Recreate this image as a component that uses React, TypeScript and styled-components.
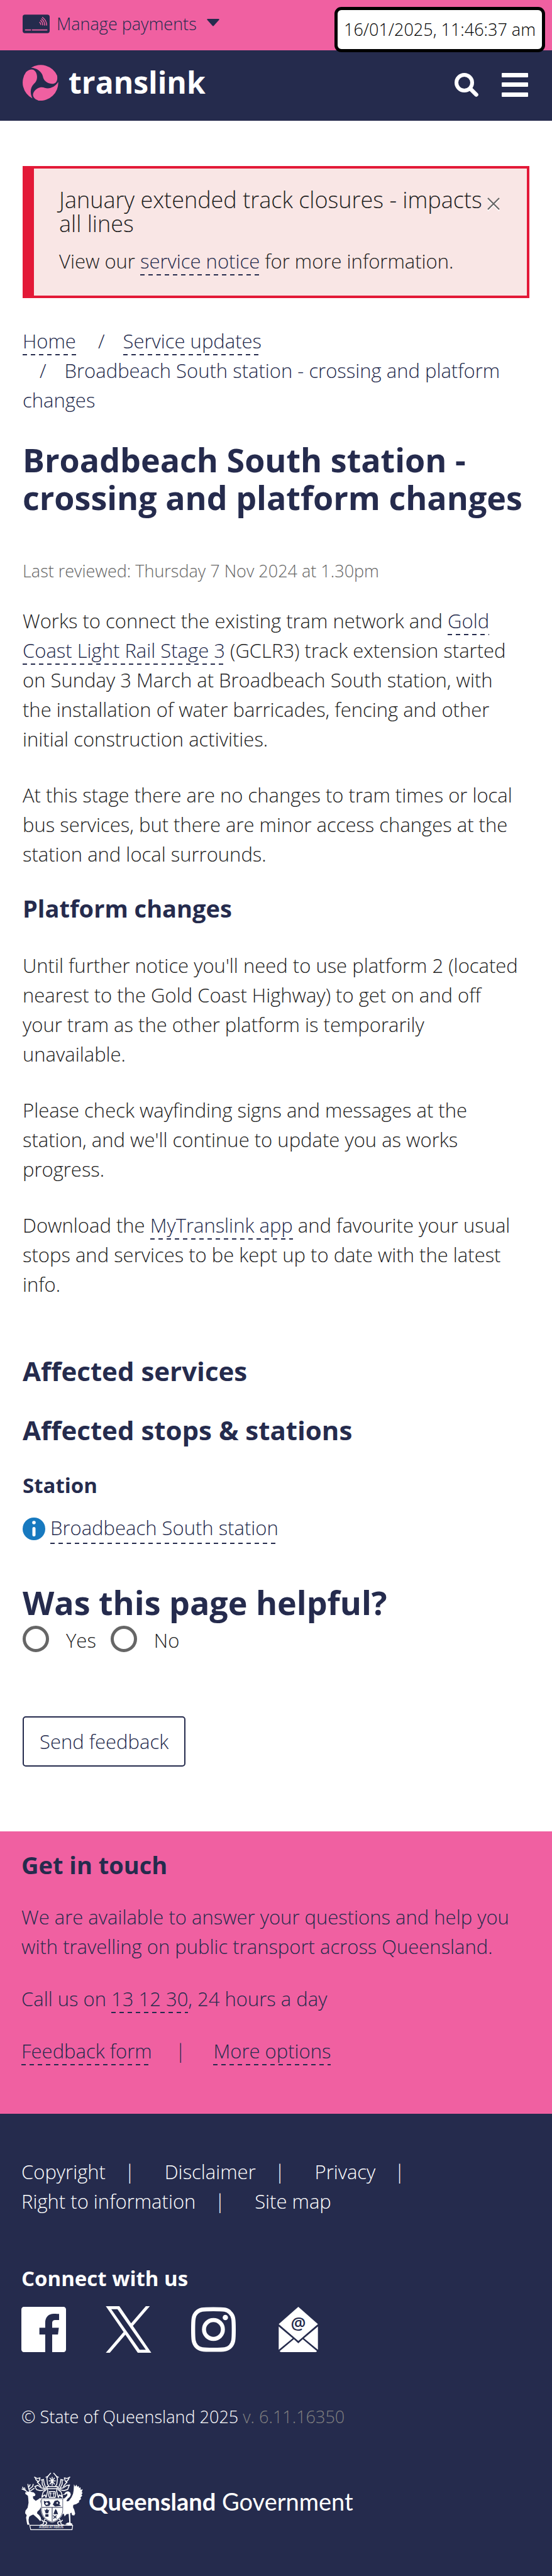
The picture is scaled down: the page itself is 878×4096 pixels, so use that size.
import React from "react";
import styled, { createGlobalStyle } from "styled-components";

const navy = "#252b4d";
const pink = "#f060a1";
const ink = "#222222";

const GlobalStyle = createGlobalStyle`
  *, *::before, *::after { box-sizing: border-box; }
  body {
    margin: 0;
    background: #ffffff;
    color: ${ink};
    font-family: "Open Sans", "Noto Sans", sans-serif;
    font-size: 31px;
    font-weight: 300;
    line-height: 47px;
  }
  p, h1, h2, h3, h4, ul, ol, fieldset, legend { margin: 0; padding: 0; border: 0; }
  ul, ol { list-style: none; }
  svg { display: block; flex-shrink: 0; }
`;

const PaymentsBar = styled.div`
  position: relative;
  display: flex;
  align-items: center;
  height: 80px;
  padding: 0 36px;
  background: ${pink};
`;

const PaymentsButton = styled.button`
  display: flex;
  align-items: center;
  gap: 11px;
  padding: 0 0 4px;
  border: 0;
  background: none;
  color: ${navy};
  font: inherit;
  font-size: 27px;
  line-height: 40px;
`;

const Caret = styled.svg`
  margin: 0 0 5px 5px;
`;

const Clock = styled.time`
  position: absolute;
  top: 11px;
  right: 11px;
  z-index: 1;
  padding: 11px 10px;
  border: 5px solid #000000;
  border-radius: 11px;
  background: #ffffff;
  color: #000000;
  font-size: 27px;
  line-height: 40px;
  white-space: nowrap;
`;

const Masthead = styled.header`
  display: flex;
  align-items: center;
  justify-content: space-between;
  height: 112px;
  padding: 0 38px 10px 36px;
  background: ${navy};
`;

const Brand = styled.a`
  display: flex;
  align-items: center;
  gap: 16px;
  color: #ffffff;
  font-size: 48px;
  font-weight: 700;
  line-height: 60px;
  text-decoration: none;
`;

const Tools = styled.div`
  display: flex;
  align-items: center;
  gap: 37px;
  padding-top: 7px;
`;

const IconButton = styled.button`
  padding: 0;
  border: 0;
  background: none;
  color: inherit;
`;

const Main = styled.main`
  padding: 72px 36px 103px;
`;

const Alert = styled.section`
  display: flex;
  align-items: flex-start;
  justify-content: space-between;
  padding: 31px 43px 31px 40px;
  border: 4px solid #e31937;
  border-left-width: 18px;
  background: #f9e6e5;
  h4 {
    margin-bottom: 17px;
    font-size: 36px;
    font-weight: 300;
    line-height: 38px;
  }
`;

const AlertText = styled.div`
  flex: 1;
`;

const CloseButton = styled(IconButton)`
  padding-top: 15px;
`;

const Link = styled.a`
  padding-bottom: 2px;
  color: ${navy};
  text-decoration: none;
  background: repeating-linear-gradient(90deg, ${navy} 0 7px, transparent 7px 13px) left bottom / 100% 2px no-repeat;
  -webkit-box-decoration-break: clone;
  box-decoration-break: clone;
`;

const Breadcrumbs = styled.ol`
  margin-top: 45px;
  color: ${navy};
  li { display: inline-block; }
  li + li::before {
    content: "/";
    margin: 0 29px 0 27px;
  }
`;

const PageTitle = styled.h1`
  margin: 41px 0 67px;
  color: ${navy};
  font-size: 52px;
  font-weight: 700;
  line-height: 60px;
`;

const Reviewed = styled.p`
  margin-bottom: 36px;
  color: #666666;
  font-size: 27px;
  line-height: 40px;
`;

const Paragraph = styled.p`
  margin-bottom: 42px;
  padding-right: 14px;
`;

const Heading = styled.h2<{ $size: number; $above: number; $below: number; $line?: number }>`
  margin: ${(p) => p.$above}px 0 ${(p) => p.$below}px;
  color: ${navy};
  font-size: ${(p) => p.$size}px;
  font-weight: 700;
  line-height: ${(p) => p.$line ?? 47}px;
`;

const StationRow = styled.p`
  display: flex;
  align-items: center;
  gap: 8px;
`;

const Feedback = styled.form`
  margin-top: 63px;
  legend {
    margin-bottom: 7px;
    color: ${navy};
    font-size: 52px;
    font-weight: 700;
    line-height: 60px;
  }
`;

const Choices = styled.div`
  display: flex;
  gap: 23px;
`;

const Choice = styled.label`
  display: flex;
  gap: 27px;
`;

const Radio = styled.input`
  appearance: none;
  width: 42px;
  height: 42px;
  margin: 0;
  border: 5px solid #666666;
  border-radius: 50%;
  &:checked { background: radial-gradient(${navy} 40%, transparent 45%); }
`;

const SendButton = styled.button`
  display: block;
  height: 80px;
  margin-top: 97px;
  padding: 0 25px;
  border: 2px solid ${navy};
  border-radius: 5px;
  background: #ffffff;
  color: ${navy};
  font: inherit;
`;

const Contact = styled.section`
  padding: 30px 34px 76px;
  background: ${pink};
  color: ${navy};
`;

const ContactText = styled.p`
  margin-bottom: 36px;
`;

const ContactLinks = styled.ul`
  display: flex;
  li + li::before {
    content: "|";
    margin: 0 44px 0 37px;
  }
`;

const Footer = styled.footer`
  padding: 69px 34px 76px;
  background: ${navy};
  color: #ffffff;
`;

const FooterLinks = styled.ul`
  display: flex;
  flex-wrap: wrap;
  column-gap: 47px;
  margin-right: 150px;
  a { color: inherit; text-decoration: none; }
  li:not(:last-child)::after {
    content: "|";
    margin-left: 30px;
  }
`;

const ConnectTitle = styled.h2`
  margin: 75px 0 22px;
  font-size: 33px;
  font-weight: 700;
  line-height: 47px;
`;

const SocialLinks = styled.ul`
  display: flex;
  gap: 64px;
  a {
    display: flex;
    align-items: center;
    justify-content: center;
    width: 71px;
    height: 72px;
    color: #ffffff;
  }
`;

const Legal = styled.p`
  margin: 83px 0 68px;
  font-size: 27px;
  line-height: 40px;
  span { color: #808080; }
`;

const Government = styled.a`
  display: flex;
  align-items: center;
  gap: 9px;
  color: #ffffff;
  font-family: Lato, "Open Sans", sans-serif;
  font-size: 38px;
  font-weight: 400;
  line-height: 47px;
  text-decoration: none;
  b { font-weight: 700; }
`;

const CardIcon = () => (
  <svg width="43" height="30" viewBox="0 0 58 40" aria-hidden="true">
    <rect width="58" height="40" rx="5" fill={navy} />
    <path d="M5 33h13M20 33h33" stroke={pink} strokeWidth="2.4" />
    <g fill="none" stroke={pink} strokeWidth="2">
      <path d="M42 5.500Q52 13 51.500 23.500" />
      <path d="M40 8.500Q48 15 47.200 23.500" />
      <path d="M38 12Q43.500 16 43 23" />
      <path d="M36 16Q39 18.500 39 22" />
    </g>
  </svg>
);

const TranslinkMark = () => {
  const blade =
    "M18 6.500A38.500 38.500 0 0 1 74 23C76 34 72 41 63 41C51 40 45 33 43.500 25C41 14 30 7 18 6.500Z";
  return (
    <svg width="57" height="57" viewBox="0 0 77 77" aria-hidden="true">
      <g fill={pink}>
        <path d={blade} />
        <path d={blade} transform="rotate(120 38.5 38.5)" />
        <path d={blade} transform="rotate(240 38.5 38.5)" />
      </g>
    </svg>
  );
};

const FacebookIcon = () => (
  <svg width="71" height="72" viewBox="0 0 24 24" fill="currentColor" preserveAspectRatio="none">
    <path d="M22.675 0h-21.35C.593 0 0 .593 0 1.325v21.351C0 23.407.593 24 1.325 24H12.820v-9.294H9.692v-3.622h3.128V8.413c0-3.100 1.893-4.788 4.659-4.788 1.325 0 2.463.099 2.795.143v3.240l-1.918.001c-1.504 0-1.795.715-1.795 1.763v2.313h3.587l-.467 3.622h-3.120V24h6.116c.730 0 1.323-.593 1.323-1.325V1.325C24 .593 23.407 0 22.675 0z" />
  </svg>
);

const XIcon = () => (
  <svg width="73" height="74" viewBox="0 0 1200 1227" fill="currentColor">
    <path d="M714.163 519.284L1160.890 0H1055.030L667.137 450.887L357.328 0H0L468.492 681.821L0 1226.370H105.866L515.491 750.218L842.672 1226.370H1200L714.137 519.284H714.163ZM569.165 687.828L521.697 619.934L144.011 79.694H306.615L611.412 515.685L658.880 583.579L1055.080 1150.300H892.476L569.165 687.854V687.828Z" />
  </svg>
);

const InstagramIcon = () => (
  <svg width="71" height="72" viewBox="0 0 24 24" fill="none" stroke="currentColor" strokeWidth="2.16">
    <path d="M12 1.080C18 1.080 19.400 1.200 20.900 2.900C22.800 4.600 22.920 6.500 22.920 12C22.920 17.500 22.800 19.400 21.100 21.100C19.400 22.800 18 22.920 12 22.920C6 22.920 4.600 22.800 2.900 21.100C1.200 19.400 1.080 17.500 1.080 12C1.080 6.500 1.200 4.600 2.900 2.900C4.600 1.200 6 1.080 12 1.080Z" />
    <circle cx="12" cy="12" r="5.080" />
    <circle cx="18.400" cy="5.600" r="1.440" fill="currentColor" stroke="none" />
  </svg>
);

const MailIcon = () => (
  <svg width="63" height="72" viewBox="0 0 84 97">
    <g fill="#ffffff">
      <path d="M42 0L84 37L42 73L0 37Z" />
      <path d="M0 42L30 67.500L0 92Z" />
      <path d="M84 42L54 67.500L84 92Z" />
      <path d="M32.500 69.500L42 78L51.500 69.500L82 95Q81 97 79 97H5Q3 97 2 95Z" />
    </g>
    <text x="42" y="48" fill={navy} fontFamily="Open Sans" fontSize="36" fontWeight="600" textAnchor="middle">@</text>
  </svg>
);

const InfoIcon = () => (
  <svg width="36" height="36" viewBox="0 0 36 36" aria-hidden="true">
    <circle cx="18" cy="18" r="18" fill="#1779bf" />
    <circle cx="18" cy="8" r="2.800" fill="#ffffff" />
    <rect x="15.500" y="15" width="5" height="15" rx="2.500" fill="#ffffff" />
  </svg>
);

const Crest = () => (
  <svg width="98" height="92" viewBox="18 20 396 372" aria-hidden="true">
    {/* stag */}
    <g fill="#ffffff">
      <path d="M42 150L62 144L78 145L98 150L108 162L106 172L92 176L94 190L110 204L124 196L138 186L148 192L140 204L146 240L134 262L122 272L118 284L132 296L142 310L146 328L138 334L132 326L120 314L104 300L94 292L80 298L68 306L64 326L66 344L72 358L56 358L52 338L48 312L52 296L42 284L44 268L58 248L64 216L62 188L60 172L44 160Z" />
      <path d="M292 162L304 146L318 142L332 150L336 164L330 178L316 190L308 202L312 208L324 204L340 182L350 160L354 136L356 98L364 112L372 100L378 114L386 108L390 122L398 116L400 134L412 128L406 148L412 152L404 164L410 170L398 184L402 192L388 204L390 212L372 224L352 230L350 244L358 262L364 286L358 298L344 296L340 280L332 284L334 346L346 352L344 362L322 360L300 356L312 346L326 342L322 288L308 290L296 304L290 286L276 292L270 270L276 240L272 210L286 194L304 180L314 168L312 156L302 164L280 168L270 178L268 170Z" />
    </g>
    <g fill="none" stroke="#ffffff" strokeWidth="6" strokeLinecap="round" strokeLinejoin="round">
      <path d="M56 146C44 134 34 132 22 128M34 132L26 116M44 138L38 120M72 144C64 128 62 112 60 98M64 118L74 100M70 128L90 112L94 98M76 140L100 124" />
      {/* helmet and mantling */}
      <path d="M190 44L182 60L186 96L196 112M242 44L250 60L246 96L236 112M190 44L206 26M242 44L226 26M190 46L176 52M242 46L256 52" />
      <path d="M182 112H250M188 126H244M182 112L188 144M250 112L244 144" />
      <path d="M216 52V104M196 76H236M202 58L230 96M230 58L202 96" />
      <path d="M102 52L120 60L138 56L132 76L120 84L132 96L144 112M106 52L112 68L128 82M144 70L160 66L164 90L172 112L178 126M152 70V96L164 120M330 52L312 60L294 56L300 76L312 84L300 96L288 112M326 52L320 68L304 82M288 70L272 66L268 90L260 112L254 126M280 70V96L268 120" />
      <path d="M104 112L124 104L144 120L172 126M106 114L116 132L140 138L168 132M328 102L308 106L288 120L260 126M326 104L316 130L292 138L264 132" />
      <path d="M178 132L158 148L150 176L170 166L176 182M160 172L150 182M254 132L274 148L282 176L262 166L256 182M272 172L282 182M186 146L178 178M246 146L254 178" />
      <path d="M198 144C192 160 192 172 198 182H234C240 172 240 160 234 144Z" />
      <path d="M206 150V176M226 150V176M200 158H212M220 158H232" strokeWidth="4" />
      {/* scroll */}
      <path d="M150 328L162 340L158 354L140 360M172 322C160 328 164 340 176 338C190 350 170 364 152 362M282 328L270 340L274 354L292 360M260 322C272 328 268 340 256 338C242 350 262 364 280 362" />
      <path d="M72 361H348L344 389H78Z" strokeWidth="5" />
    </g>
    {/* shield */}
    <path d="M144 186H288V264C288 308 250 334 216 346C182 334 144 308 144 264Z" fill="#ffffff" />
    <path d="M148 190H284V264C284 306 248 330 216 342C184 330 148 306 148 264Z" fill="none" stroke={navy} strokeWidth="3" />
    <path d="M150 246H282M216 246V338" stroke={navy} strokeWidth="4" />
    <g fill={navy}>
      <path d="M162 202L174 208L196 204L206 220L198 236L176 238L164 224ZM220 228L232 204L252 200L266 214L262 228L274 236L234 240Z" />
      <path d="M166 258L174 284H190L198 258L190 266L182 254L174 266ZM172 290H192V306H172ZM238 256L246 268L254 290H224L232 268Z" />
    </g>
    <path d="M170 222L182 212L192 224L180 230ZM240 218L252 210L254 224Z" fill="#ffffff" />
    <path d="M222 298L244 316M244 298L224 318" stroke={navy} strokeWidth="6" />
    <text x="210" y="381" fill="#ffffff" fontFamily="Open Sans" fontSize="18" fontWeight="600" textAnchor="middle">AUDAX AT FIDELIS</text>
  </svg>
);

export default function App() {
  return (
    <>
      <GlobalStyle />
      <PaymentsBar>
        <PaymentsButton type="button">
          <CardIcon />
          Manage payments
          <Caret width="20" height="12" viewBox="0 0 20 12" aria-hidden="true">
            <path d="M1 0H19Q20 0 19.500 1.500L11 11Q10 12 9 11L.5 1.500Q0 0 1 0Z" fill={navy} />
          </Caret>
        </PaymentsButton>
        <Clock>16/01/2025, 11:46:37 am</Clock>
      </PaymentsBar>

      <Masthead>
        <Brand href="#">
          <TranslinkMark />
          translink
        </Brand>
        <Tools>
          <IconButton type="button" aria-label="Search">
            <svg width="38" height="38" viewBox="0 0 38 38" fill="none" stroke="#ffffff" strokeLinecap="round">
              <circle cx="15.500" cy="15.500" r="12.500" strokeWidth="6" />
              <path d="M25 25L34.500 34.500" strokeWidth="6.500" />
            </svg>
          </IconButton>
          <IconButton type="button" aria-label="Menu">
            <svg width="42" height="38" viewBox="0 0 42 38" fill="#ffffff">
              <rect width="42" height="7" rx="1" />
              <rect y="15" width="42" height="7" rx="1" />
              <rect y="31" width="42" height="7" rx="1" />
            </svg>
          </IconButton>
        </Tools>
      </Masthead>

      <Main>
        <Alert>
          <AlertText>
            <h4>January extended track closures - impacts all lines</h4>
            <p>
              View our <Link href="#">service notice</Link> for more information.
            </p>
          </AlertText>
          <CloseButton type="button" aria-label="Close">
            <svg width="20" height="22" viewBox="0 0 20 22" fill="none" strokeWidth="2.200">
              <path d="M1 3L19 21M19 3L1 21" stroke="#ffffff" />
              <path d="M1 1L19 19M19 1L1 19" stroke="#666666" />
            </svg>
          </CloseButton>
        </Alert>

        <Breadcrumbs>
          <li><Link href="#">Home</Link></li>{" "}
          <li><Link href="#">Service updates</Link></li>{" "}
          <li>Broadbeach South station - crossing and platform changes</li>
        </Breadcrumbs>

        <PageTitle>Broadbeach South station - crossing and platform changes</PageTitle>
        <Reviewed>Last reviewed: Thursday 7 Nov 2024 at 1.30pm</Reviewed>

        <Paragraph>
          Works to connect the existing tram network and <Link href="#">Gold Coast Light Rail Stage 3</Link> (GCLR3)
          track extension started on Sunday 3 March at Broadbeach South station, with the installation of water
          barricades, fencing and other initial construction activities.
        </Paragraph>
        <Paragraph>
          At this stage there are no changes to tram times or local bus services, but there are minor access changes at
          the station and local surrounds.
        </Paragraph>

        <Heading $size={38} $above={42} $below={48} $line={40}>Platform changes</Heading>
        <Paragraph>
          Until further notice you'll need to use platform 2 (located nearest to the Gold Coast Highway) to get on and
          off your tram as the other platform is temporarily unavailable.
        </Paragraph>
        <Paragraph>
          Please check wayfinding signs and messages at the station, and we'll continue to update you as works progress.
        </Paragraph>
        <Paragraph>
          Download the <Link href="#">MyTranslink app</Link> and favourite your usual stops and services to be kept up
          to date with the latest info.
        </Paragraph>

        <Heading $size={42} $above={90} $below={47}>Affected services</Heading>
        <Heading $size={42} $above={47} $below={41}>Affected stops &amp; stations</Heading>
        <Heading as="h3" $size={33} $above={41} $below={21}>Station</Heading>
        <StationRow>
          <InfoIcon />
          <Link href="#">Broadbeach South station</Link>
        </StationRow>

        <Feedback>
          <fieldset>
            <legend>Was this page helpful?</legend>
            <Choices>
              <Choice>
                <Radio type="radio" name="helpful" value="yes" />
                Yes
              </Choice>
              <Choice>
                <Radio type="radio" name="helpful" value="no" />
                No
              </Choice>
            </Choices>
          </fieldset>
          <SendButton type="button">Send feedback</SendButton>
        </Feedback>
      </Main>

      <Contact>
        <Heading $size={38} $above={0} $below={36}>Get in touch</Heading>
        <ContactText>
          We are available to answer your questions and help you with travelling on public transport across Queensland.
        </ContactText>
        <ContactText>
          Call us on <Link href="#">13 12 30</Link>, 24 hours a day
        </ContactText>
        <ContactLinks>
          <li><Link href="#">Feedback form</Link></li>
          <li><Link href="#">More options</Link></li>
        </ContactLinks>
      </Contact>

      <Footer>
        <FooterLinks>
          <li><a href="#">Copyright</a></li>
          <li><a href="#">Disclaimer</a></li>
          <li><a href="#">Privacy</a></li>
          <li><a href="#">Right to information</a></li>
          <li><a href="#">Site map</a></li>
        </FooterLinks>
        <ConnectTitle>Connect with us</ConnectTitle>
        <SocialLinks>
          <li><a href="#" aria-label="Facebook"><FacebookIcon /></a></li>
          <li><a href="#" aria-label="X"><XIcon /></a></li>
          <li><a href="#" aria-label="Instagram"><InstagramIcon /></a></li>
          <li><a href="#" aria-label="Email"><MailIcon /></a></li>
        </SocialLinks>
        <Legal>
          © State of Queensland 2025 <span>v. 6.11.16350</span>
        </Legal>
        <Government href="#">
          <Crest />
          <span><b>Queensland</b> Government</span>
        </Government>
      </Footer>
    </>
  );
}
